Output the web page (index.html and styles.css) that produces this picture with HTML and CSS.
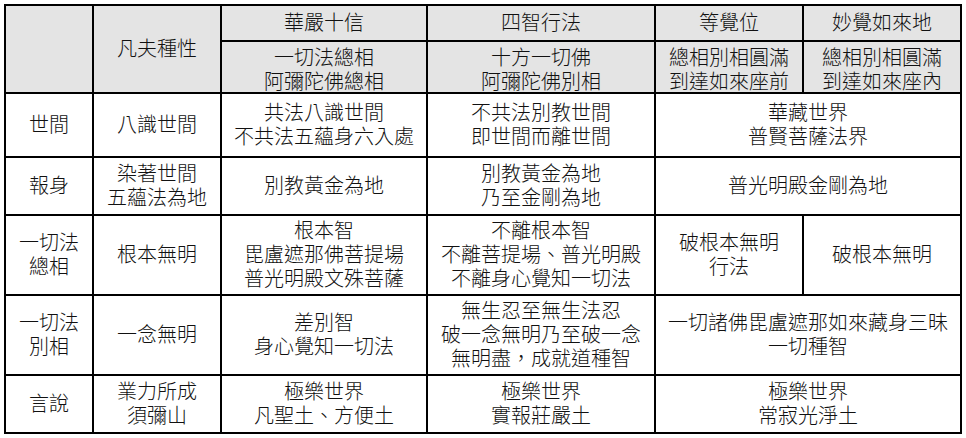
FILE: index.html
```html
<!DOCTYPE html>
<html lang="zh-Hant">
<head>
<meta charset="utf-8">
<title>表</title>
<link rel="stylesheet" href="styles.css">
</head>
<body>
<div class="table">
  <div class="cell head span-r2"></div>
  <div class="cell head span-r2"><span class="ln">凡夫種性</span></div>
  <div class="cell head"><span class="ln">華嚴十信</span></div>
  <div class="cell head"><span class="ln">四智行法</span></div>
  <div class="cell head"><span class="ln">等覺位</span></div>
  <div class="cell head"><span class="ln">妙覺如來地</span></div>
  <div class="cell head sub"><span class="ln">一切法總相</span><span class="ln">阿彌陀佛總相</span></div>
  <div class="cell head sub"><span class="ln">十方一切佛</span><span class="ln">阿彌陀佛別相</span></div>
  <div class="cell head sub"><span class="ln">總相別相圓滿</span><span class="ln">到達如來座前</span></div>
  <div class="cell head sub"><span class="ln">總相別相圓滿</span><span class="ln">到達如來座內</span></div>

  <div class="cell"><span class="ln">世間</span></div>
  <div class="cell"><span class="ln">八識世間</span></div>
  <div class="cell"><span class="ln">共法八識世間</span><span class="ln">不共法五蘊身六入處</span></div>
  <div class="cell"><span class="ln">不共法別教世間</span><span class="ln">即世間而離世間</span></div>
  <div class="cell span-c2"><span class="ln">華藏世界</span><span class="ln">普賢菩薩法界</span></div>

  <div class="cell"><span class="ln">報身</span></div>
  <div class="cell"><span class="ln">染著世間</span><span class="ln">五蘊法為地</span></div>
  <div class="cell"><span class="ln">別教黃金為地</span></div>
  <div class="cell"><span class="ln">別教黃金為地</span><span class="ln">乃至金剛為地</span></div>
  <div class="cell span-c2"><span class="ln">普光明殿金剛為地</span></div>

  <div class="cell"><span class="ln">一切法</span><span class="ln">總相</span></div>
  <div class="cell"><span class="ln">根本無明</span></div>
  <div class="cell"><span class="ln">根本智</span><span class="ln">毘盧遮那佛菩提場</span><span class="ln">普光明殿文殊菩薩</span></div>
  <div class="cell"><span class="ln">不離根本智</span><span class="ln">不離菩提場、普光明殿</span><span class="ln">不離身心覺知一切法</span></div>
  <div class="cell"><span class="ln">破根本無明</span><span class="ln">行法</span></div>
  <div class="cell"><span class="ln">破根本無明</span></div>

  <div class="cell"><span class="ln">一切法</span><span class="ln">別相</span></div>
  <div class="cell"><span class="ln">一念無明</span></div>
  <div class="cell"><span class="ln">差別智</span><span class="ln">身心覺知一切法</span></div>
  <div class="cell"><span class="ln">無生忍至無生法忍</span><span class="ln">破一念無明乃至破一念</span><span class="ln">無明盡，成就道種智</span></div>
  <div class="cell span-c2"><span class="ln">一切諸佛毘盧遮那如來藏身三昧</span><span class="ln">一切種智</span></div>

  <div class="cell"><span class="ln">言說</span></div>
  <div class="cell"><span class="ln">業力所成</span><span class="ln">須彌山</span></div>
  <div class="cell"><span class="ln">極樂世界</span><span class="ln">凡聖土、方便土</span></div>
  <div class="cell"><span class="ln">極樂世界</span><span class="ln">實報莊嚴土</span></div>
  <div class="cell span-c2"><span class="ln">極樂世界</span><span class="ln">常寂光淨土</span></div>
</div>
</body>
</html>
```

FILE: styles.css
```css
html, body {
  margin: 0;
  padding: 0;
  background: #ffffff;
}

body {
  padding: 4px;
  font-family: "Liberation Serif", "Noto Sans CJK TC", serif;
  font-size: 20px;
  font-weight: 300;
  color: #111111;
}

.table {
  display: grid;
  width: max-content;
  grid-template-columns: 86px 126px 204px 226px 146px 156px;
  grid-template-rows: 34px 50px 62px 56px 78px 78px 56px;
  gap: 2px;
  padding: 2px;
  background: #000000;
}

.cell {
  background: #ffffff;
  display: flex;
  flex-direction: column;
  align-items: center;
  justify-content: center;
  text-align: center;
  white-space: nowrap;
}

.head {
  background: #e4e4e4;
}

.sub {
  padding-top: 6px;
}

.ln {
  display: block;
  line-height: 24px;
}

.span-r2 {
  grid-row: span 2;
}

.span-c2 {
  grid-column: span 2;
}
```
